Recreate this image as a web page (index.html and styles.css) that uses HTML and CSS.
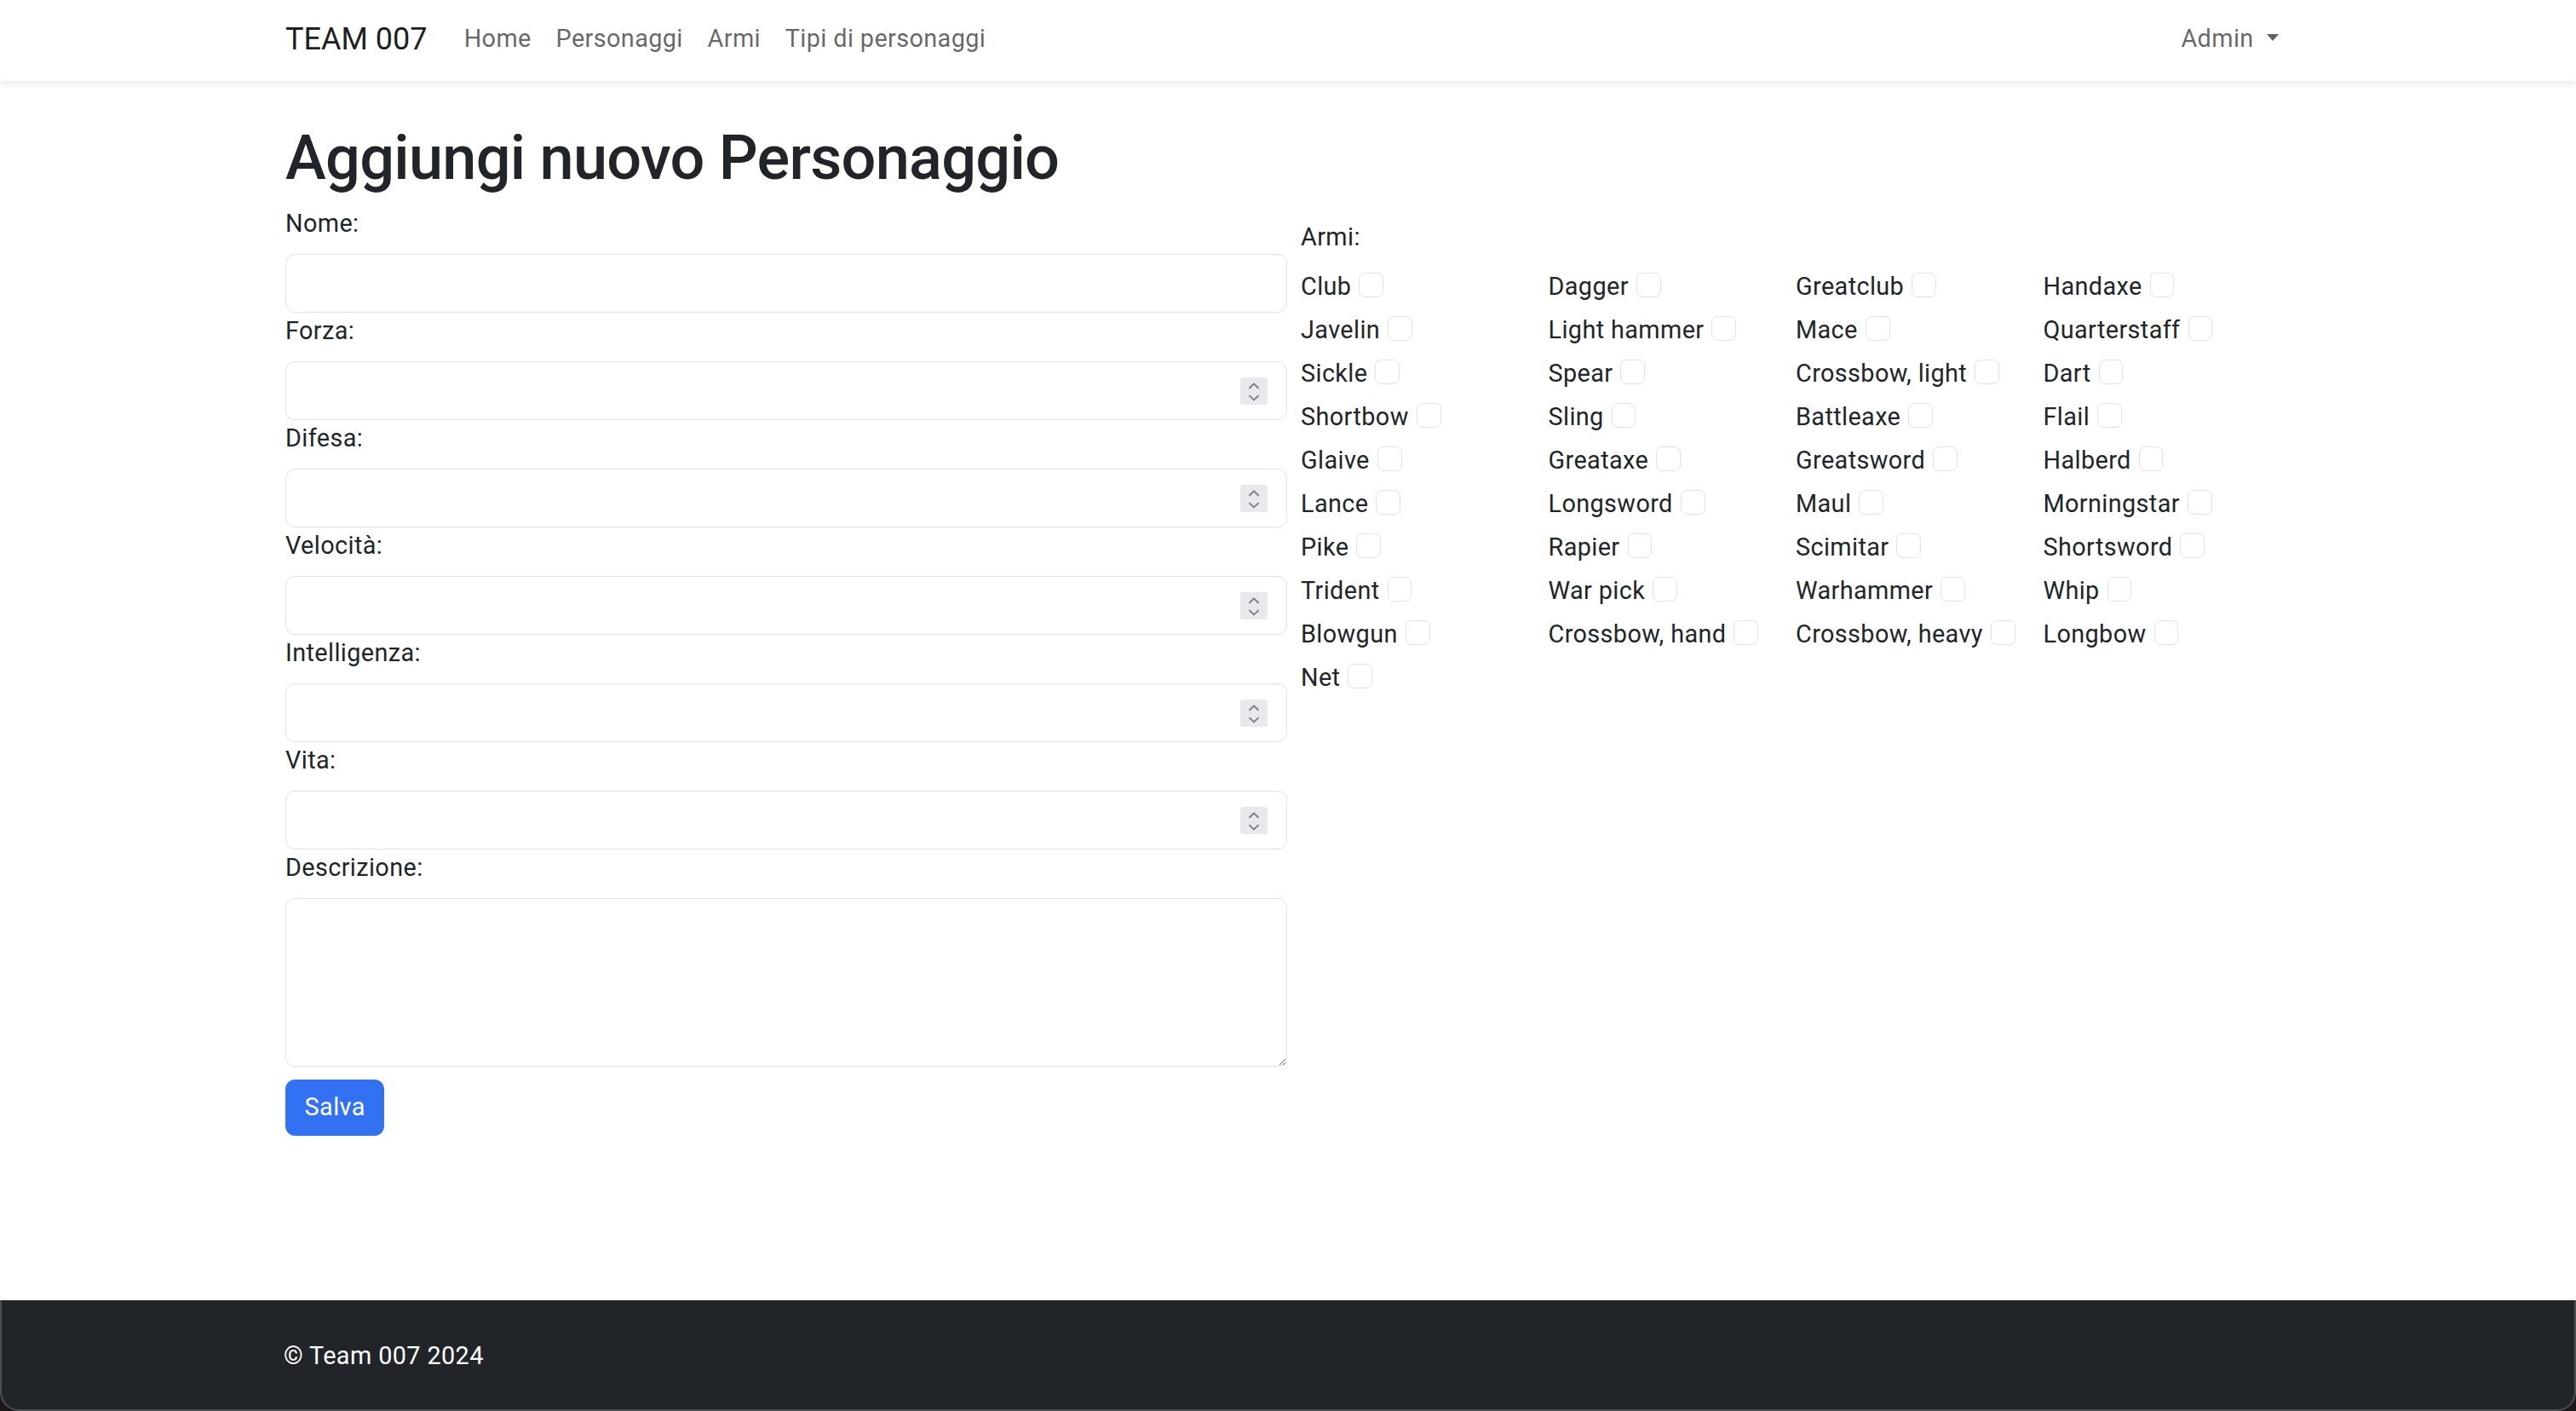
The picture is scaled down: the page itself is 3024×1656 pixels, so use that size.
FILE: index.html
```html
<!DOCTYPE html>
<html lang="it">
<head>
<meta charset="utf-8">
<title>Aggiungi nuovo Personaggio</title>
<link rel="stylesheet" href="styles.css">
</head>
<body>
<nav class="navbar">
  <div class="container nav-inner">
    <a class="brand" href="#">TEAM 007</a>
    <ul class="nav-links">
      <li><a href="#">Home</a></li>
      <li><a href="#">Personaggi</a></li>
      <li><a href="#">Armi</a></li>
      <li><a href="#">Tipi di personaggi</a></li>
    </ul>
    <a class="dropdown" href="#">Admin<span class="caret"></span></a>
  </div>
</nav>

<main class="main">
  <div class="container">
    <h1 class="title">Aggiungi nuovo Personaggio</h1>
    <form class="char-form">
      <div class="col-left">
        <label class="lbl" for="nome">Nome:</label>
        <input class="control" id="nome" type="text">

        <label class="lbl">Forza:</label>
        <div class="control num"><input class="num-input" type="text"><span class="spin"><svg viewBox="0 0 32 32" width="32" height="32"><path d="M11 12.2 L16 7.4 L21 12.2" /><path d="M11 21.6 L16 26.4 L21 21.6" /></svg></span></div>

        <label class="lbl">Difesa:</label>
        <div class="control num"><input class="num-input" type="text"><span class="spin"><svg viewBox="0 0 32 32" width="32" height="32"><path d="M11 12.2 L16 7.4 L21 12.2" /><path d="M11 21.6 L16 26.4 L21 21.6" /></svg></span></div>

        <label class="lbl">Velocità:</label>
        <div class="control num"><input class="num-input" type="text"><span class="spin"><svg viewBox="0 0 32 32" width="32" height="32"><path d="M11 12.2 L16 7.4 L21 12.2" /><path d="M11 21.6 L16 26.4 L21 21.6" /></svg></span></div>

        <label class="lbl">Intelligenza:</label>
        <div class="control num"><input class="num-input" type="text"><span class="spin"><svg viewBox="0 0 32 32" width="32" height="32"><path d="M11 12.2 L16 7.4 L21 12.2" /><path d="M11 21.6 L16 26.4 L21 21.6" /></svg></span></div>

        <label class="lbl">Vita:</label>
        <div class="control num"><input class="num-input" type="text"><span class="spin"><svg viewBox="0 0 32 32" width="32" height="32"><path d="M11 12.2 L16 7.4 L21 12.2" /><path d="M11 21.6 L16 26.4 L21 21.6" /></svg></span></div>

        <label class="lbl" for="descr">Descrizione:</label>
        <textarea class="control area" id="descr" rows="4"></textarea>

        <div><button class="btn" type="button">Salva</button></div>
      </div>

      <div class="col-right">
        <div class="lbl">Armi:</div>
        <div class="weapons">
          <label class="weapon">Club<span class="check"></span></label>
          <label class="weapon">Dagger<span class="check"></span></label>
          <label class="weapon">Greatclub<span class="check"></span></label>
          <label class="weapon">Handaxe<span class="check"></span></label>
          <label class="weapon">Javelin<span class="check"></span></label>
          <label class="weapon">Light hammer<span class="check"></span></label>
          <label class="weapon">Mace<span class="check"></span></label>
          <label class="weapon">Quarterstaff<span class="check"></span></label>
          <label class="weapon">Sickle<span class="check"></span></label>
          <label class="weapon">Spear<span class="check"></span></label>
          <label class="weapon">Crossbow, light<span class="check"></span></label>
          <label class="weapon">Dart<span class="check"></span></label>
          <label class="weapon">Shortbow<span class="check"></span></label>
          <label class="weapon">Sling<span class="check"></span></label>
          <label class="weapon">Battleaxe<span class="check"></span></label>
          <label class="weapon">Flail<span class="check"></span></label>
          <label class="weapon">Glaive<span class="check"></span></label>
          <label class="weapon">Greataxe<span class="check"></span></label>
          <label class="weapon">Greatsword<span class="check"></span></label>
          <label class="weapon">Halberd<span class="check"></span></label>
          <label class="weapon">Lance<span class="check"></span></label>
          <label class="weapon">Longsword<span class="check"></span></label>
          <label class="weapon">Maul<span class="check"></span></label>
          <label class="weapon">Morningstar<span class="check"></span></label>
          <label class="weapon">Pike<span class="check"></span></label>
          <label class="weapon">Rapier<span class="check"></span></label>
          <label class="weapon">Scimitar<span class="check"></span></label>
          <label class="weapon">Shortsword<span class="check"></span></label>
          <label class="weapon">Trident<span class="check"></span></label>
          <label class="weapon">War pick<span class="check"></span></label>
          <label class="weapon">Warhammer<span class="check"></span></label>
          <label class="weapon">Whip<span class="check"></span></label>
          <label class="weapon">Blowgun<span class="check"></span></label>
          <label class="weapon">Crossbow, hand<span class="check"></span></label>
          <label class="weapon">Crossbow, heavy<span class="check"></span></label>
          <label class="weapon">Longbow<span class="check"></span></label>
          <label class="weapon">Net<span class="check"></span></label>
        </div>
      </div>
    </form>
  </div>
</main>

<footer class="footer">
  <div class="container">© Team 007 2024</div>
</footer>
</body>
</html>
```

FILE: styles.css
```css
html {
  background: #1c1718;
}
body {
  margin: 0;
  min-height: 100vh;
  display: flex;
  flex-direction: column;
  font-family: Roboto, "Liberation Sans", Arial, sans-serif;
  font-size: 28.8px;
  line-height: 43.2px;
  letter-spacing: 0.4px;
  color: #212529;
}
.container {
  width: 2354px;
  margin: 0 auto;
}

/* navbar */
.navbar {
  background: #fff;
  height: 95px;
  box-shadow: 0 3.6px 7.2px rgba(0, 0, 0, 0.075);
  position: relative;
  z-index: 1;
}
.nav-inner {
  height: 95px;
  display: flex;
  align-items: center;
}
.brand {
  font-size: 36px;
  line-height: 54px;
  letter-spacing: 0;
  color: rgba(0, 0, 0, 0.9);
  text-decoration: none;
  margin-right: 28.8px;
  margin-top: -4px;
}
.nav-links {
  list-style: none;
  display: flex;
  margin: -4px 0 0;
  padding: 0;
  flex: 1;
}
.nav-links a,
.dropdown {
  display: block;
  padding: 0 14.4px;
  color: rgba(0, 0, 0, 0.62);
  text-decoration: none;
}
.dropdown {
  display: flex;
  align-items: center;
  margin-top: -4px;
}
.caret {
  display: inline-block;
  width: 0;
  height: 0;
  margin-left: 15px;
  border-top: 8.6px solid rgba(0, 0, 0, 0.62);
  border-left: 7.8px solid transparent;
  border-right: 7.8px solid transparent;
  margin-top: -2px;
}

/* main */
.main {
  flex: 1;
  background: #fff;
  padding-top: 45px;
}
.title {
  font-size: 72px;
  line-height: 86.4px;
  font-weight: 500;
  letter-spacing: -0.7px;
  margin: 0 0 14.4px;
  padding-top: 3px;
  color: #212529;
}
.char-form {
  display: grid;
  grid-template-columns: 1176px 1fr;
  column-gap: 16px;
  margin-top: -3px;
}
.col-left {
  display: flex;
  flex-direction: column;
}
.lbl {
  display: block;
  margin-bottom: 14.4px;
  padding-top: 1px;
  margin-top: -1px;
}
.control {
  box-sizing: border-box;
  width: 100%;
  height: 68.4px;
  border: 1.8px solid #dee2e6;
  border-radius: 10.8px;
  background: #fff;
  padding: 10.8px 21.6px;
  font: inherit;
  color: #212529;
  outline: none;
  margin: 0;
}
.num {
  display: flex;
  align-items: center;
  gap: 12px;
}
.num-input {
  flex: 1;
  min-width: 0;
  border: 0;
  outline: none;
  background: transparent;
  font: inherit;
  padding: 0;
  margin: 0;
}
.spin {
  width: 32px;
  height: 32px;
  background: #e9e9ed;
  border-radius: 3px;
  flex: none;
  display: flex;
}
.spin svg {
  fill: none;
  stroke: #7e7e84;
  stroke-width: 2;
  stroke-linecap: round;
  stroke-linejoin: round;
}
.area {
  height: 198px;
  resize: vertical;
  display: block;
}
.btn {
  margin-top: 14.4px;
  background: #3171f2;
  border: 1.8px solid #3171f2;
  color: #fff;
  font: inherit;
  letter-spacing: 0.4px;
  padding: 10.8px 21.6px;
  border-radius: 10.8px;
  line-height: 43.2px;
}

/* weapons */
.col-right {
  padding-top: 16px;
}
.weapons {
  display: grid;
  grid-template-columns: repeat(4, 1fr);
  grid-auto-rows: 51px;
}
.weapon {
  display: flex;
  align-items: flex-start;
  white-space: nowrap;
  padding-top: 1px;
}
.check {
  box-sizing: border-box;
  width: 28.8px;
  height: 28.8px;
  margin-top: 5px;
  margin-left: 9px;
  border: 1.8px solid #dee2e6;
  border-radius: 7.2px;
  background: #fff;
  flex: none;
}

/* footer */
.footer {
  background: #212529;
  color: #fff;
  padding: 44px 0 40.4px;
  border: 2px solid #4a4d51;
  border-top: 0;
  border-radius: 0 0 22px 22px;
}
.footer .container {
  position: relative;
  left: -2px;
}
```
